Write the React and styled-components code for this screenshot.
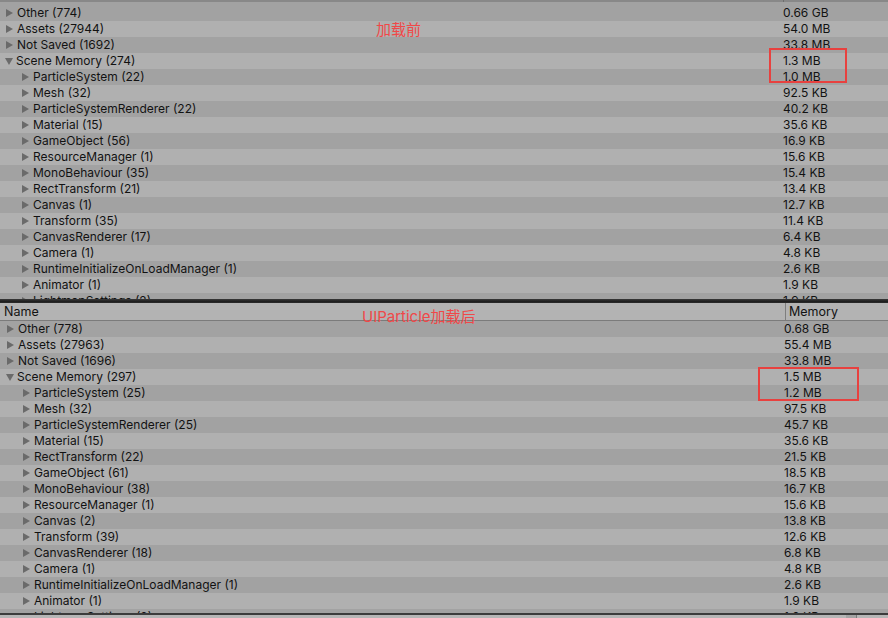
import styled, { createGlobalStyle } from "styled-components";

const GlobalStyle = createGlobalStyle`
  html, body {
    margin: 0;
    padding: 0;
    background: #a2a2a2;
    overflow: hidden;
  }
  body {
    font-family: Inter, "Noto Sans", "Liberation Sans", sans-serif;
  }
`;

const before = [
  ["Other (774)", "0.66 GB", 0, false],
  ["Assets (27944)", "54.0 MB", 0, false],
  ["Not Saved (1692)", "33.8 MB", 0, false],
  ["Scene Memory (274)", "1.3 MB", 0, true],
  ["ParticleSystem (22)", "1.0 MB", 1, false],
  ["Mesh (32)", "92.5 KB", 1, false],
  ["ParticleSystemRenderer (22)", "40.2 KB", 1, false],
  ["Material (15)", "35.6 KB", 1, false],
  ["GameObject (56)", "16.9 KB", 1, false],
  ["ResourceManager (1)", "15.6 KB", 1, false],
  ["MonoBehaviour (35)", "15.4 KB", 1, false],
  ["RectTransform (21)", "13.4 KB", 1, false],
  ["Canvas (1)", "12.7 KB", 1, false],
  ["Transform (35)", "11.4 KB", 1, false],
  ["CanvasRenderer (17)", "6.4 KB", 1, false],
  ["Camera (1)", "4.8 KB", 1, false],
  ["RuntimeInitializeOnLoadManager (1)", "2.6 KB", 1, false],
  ["Animator (1)", "1.9 KB", 1, false],
  ["LightmapSettings (2)", "1.9 KB", 1, false],
];

const after = [
  ["Other (778)", "0.68 GB", 0, false],
  ["Assets (27963)", "55.4 MB", 0, false],
  ["Not Saved (1696)", "33.8 MB", 0, false],
  ["Scene Memory (297)", "1.5 MB", 0, true],
  ["ParticleSystem (25)", "1.2 MB", 1, false],
  ["Mesh (32)", "97.5 KB", 1, false],
  ["ParticleSystemRenderer (25)", "45.7 KB", 1, false],
  ["Material (15)", "35.6 KB", 1, false],
  ["RectTransform (22)", "21.5 KB", 1, false],
  ["GameObject (61)", "18.5 KB", 1, false],
  ["MonoBehaviour (38)", "16.7 KB", 1, false],
  ["ResourceManager (1)", "15.6 KB", 1, false],
  ["Canvas (2)", "13.8 KB", 1, false],
  ["Transform (39)", "12.6 KB", 1, false],
  ["CanvasRenderer (18)", "6.8 KB", 1, false],
  ["Camera (1)", "4.8 KB", 1, false],
  ["RuntimeInitializeOnLoadManager (1)", "2.6 KB", 1, false],
  ["Animator (1)", "1.9 KB", 1, false],
  ["LightmapSettings (2)", "1.9 KB", 1, false],
];

const Page = styled.div`
  width: 888px;
  height: 618px;
  display: flex;
  flex-direction: column;
  overflow: hidden;
  color: #121212;
  font-size: 12px;
`;

const Panel = styled.div`
  position: relative;
  height: ${(p) => p.$height}px;
  overflow: hidden;
  background: #a2a2a2;
  flex-shrink: 0;
`;

const TopEdge = styled.div`
  height: 2px;
  margin-bottom: 3px;
  background: linear-gradient(to right, #888 783px, #6e6e6e 783px, #6e6e6e 784px, #888 784px);
`;

const Header = styled.div`
  display: grid;
  grid-template-columns: 785px 1fr;
  height: 17px;
  background: #b3b3b3;
  border-bottom: 1px solid #7b7b7b;
  line-height: 17px;
  font-size: 12.5px;
`;

const HeaderCell = styled.div`
  padding-left: ${(p) => p.$pad}px;
  border-left: ${(p) => (p.$divided ? "1px solid #7e7e7e" : "none")};
`;

const Row = styled.div`
  display: grid;
  grid-template-columns: ${(p) => p.$split}px 1fr;
  height: 16px;
  line-height: 16px;
  background: ${(p) => (p.$odd ? "#b0b0b0" : "#a2a2a2")};
  white-space: nowrap;
`;

const NameCell = styled.div`
  display: flex;
  align-items: center;
  padding-left: ${(p) => p.$indent}px;
`;

const Arrow = styled.span`
  width: 0;
  height: 0;
  margin-right: 4px;
  ${(p) =>
    p.$open
      ? `border-left: 4px solid transparent;
         border-right: 4px solid transparent;
         border-top: 7px solid #6a6a6a;
         margin-left: -1px;
         margin-right: 3px;`
      : `border-top: 4px solid transparent;
         border-bottom: 4px solid transparent;
         border-left: 7px solid #6a6a6a;`}
`;

const ValueCell = styled.div`
  padding-left: 3px;
`;

const Splitter = styled.div`
  height: 4px;
  flex-shrink: 0;
  background: linear-gradient(#3a3a3a, #1e1e1e 60%, #2c2c2c);
`;

const Footer = styled.div`
  flex: 1;
  overflow: hidden;
  border-top: 2px solid #3c3c3c;
  background: #b6b6b6;
  padding-left: 492px;
  line-height: 16px;
  display: flex;
`;

const FooterText = styled.span`
  margin-top: 1px;
`;

const Thumb = styled.div`
  margin-left: auto;
  margin-right: 31px;
  width: 10px;
  background: #a4a4a4;
  border-right: 1px solid #7a7a7a;
`;

const Note = styled.div`
  position: absolute;
  left: ${(p) => p.$x}px;
  top: ${(p) => p.$y}px;
  color: #f04848;
  font-size: 15px;
  line-height: 16px;
  font-family: Inter, "Noto Sans CJK SC", sans-serif;
`;

const Mark = styled.div`
  position: absolute;
  left: ${(p) => p.$x}px;
  top: ${(p) => p.$y}px;
  width: ${(p) => p.$w}px;
  height: ${(p) => p.$h}px;
  border: 2px solid #e8413f;
  box-sizing: border-box;
`;

const Tree = ({ rows, split, base }) =>
  rows.map(([name, value, depth, open], i) => (
    <Row key={name} $odd={i % 2 === 1} $split={split}>
      <NameCell $indent={base + depth * 16}>
        <Arrow $open={open} />
        {name}
      </NameCell>
      <ValueCell>{value}</ValueCell>
    </Row>
  ));

export default function App() {
  return (
    <Page>
      <GlobalStyle />
      <Panel $height={299}>
        <TopEdge />
        <Tree rows={before} split={780} base={6} />
        <Note $x={376} $y={22}>加载前</Note>
        <Mark $x={769} $y={48} $w={78} $h={35} />
      </Panel>
      <Splitter />
      <Panel $height={310}>
        <Header>
          <HeaderCell $pad={4}>Name</HeaderCell>
          <HeaderCell $pad={3} $divided>Memory</HeaderCell>
        </Header>
        <Tree rows={after} split={781} base={7} />
        <Note $x={362} $y={6}>UIParticle加载后</Note>
        <Mark $x={758} $y={64} $w={101} $h={34} />
      </Panel>
      <Footer>
        <FooterText>45.7 KB</FooterText>
        <Thumb />
      </Footer>
    </Page>
  );
}
